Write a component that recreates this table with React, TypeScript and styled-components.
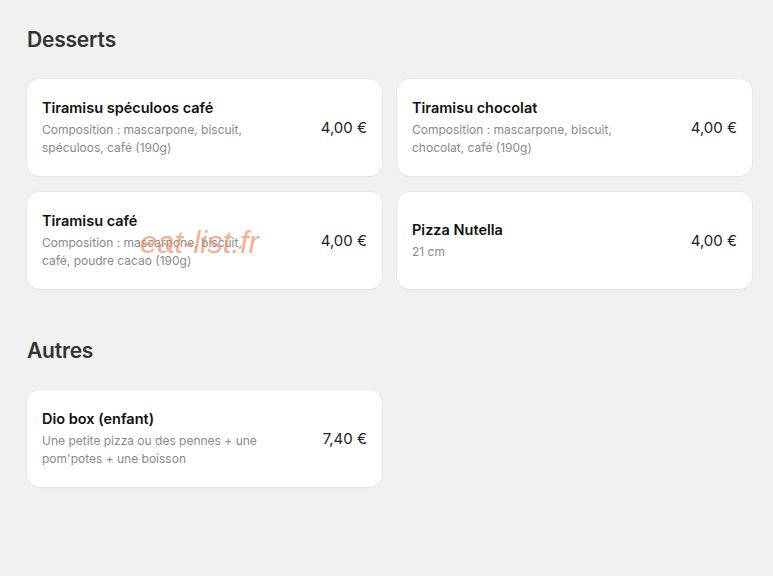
import React from "react";
import styled, { createGlobalStyle } from "styled-components";

const Global = createGlobalStyle`
  html, body { margin: 0; padding: 0; background: #f1f1f1; }
  body { font-family: Inter, "Noto Sans", sans-serif; color: #1a1a1a; }
`;

const Page = styled.div`
  position: relative;
  padding: 25px 21px 40px 27px;
  display: flex;
  flex-direction: column;
  gap: 47px;
`;

const Section = styled.section`
  display: flex;
  flex-direction: column;
  gap: 24px;
`;

const Heading = styled.h2`
  margin: 0;
  font-size: 21px;
  line-height: 30px;
  font-weight: 600;
  color: #333;
  letter-spacing: -0.2px;
`;

const Grid = styled.div`
  display: grid;
  grid-template-columns: 355px 355px;
  column-gap: 15px;
  row-gap: 16px;
`;

const Card = styled.div`
  background: #fff;
  border-radius: 13px;
  box-shadow: 0 0 0 1px rgba(0, 0, 0, 0.025), 0 1px 2px rgba(0, 0, 0, 0.035);
  min-height: 97px;
  box-sizing: border-box;
  padding: 16px 15px;
  display: flex;
  align-items: center;
  justify-content: space-between;
`;

const Info = styled.div`
  display: flex;
  flex-direction: column;
  gap: 3px;
  width: 226px;
`;

const Title = styled.div`
  font-size: 14.5px;
  line-height: 20px;
  font-weight: 600;
  color: #111;
  white-space: nowrap;
`;

const Desc = styled.div`
  font-size: 12px;
  line-height: 18px;
  color: #8a8a8a;
`;

const Price = styled.div`
  font-size: 15px;
  color: #222;
  white-space: nowrap;
`;

const Watermark = styled.div`
  position: absolute;
  left: 140px;
  top: 225px;
  font-family: "Liberation Sans", sans-serif;
  font-style: italic;
  font-size: 31px;
  color: rgba(244, 140, 100, 0.7);
  pointer-events: none;
`;

type Item = { title: string; desc: string; price: string };

const desserts: Item[] = [
  { title: "Tiramisu spéculoos café", desc: "Composition : mascarpone, biscuit, spéculoos, café (190g)", price: "4,00 €" },
  { title: "Tiramisu chocolat", desc: "Composition : mascarpone, biscuit, chocolat, café (190g)", price: "4,00 €" },
  { title: "Tiramisu café", desc: "Composition : mascarpone, biscuit, café, poudre cacao (190g)", price: "4,00 €" },
  { title: "Pizza Nutella", desc: "21 cm", price: "4,00 €" },
];

const autres: Item[] = [
  { title: "Dio box (enfant)", desc: "Une petite pizza ou des pennes + une pom'potes + une boisson", price: "7,40 €" },
];

const ItemCard = ({ item }: { item: Item }) => (
  <Card>
    <Info>
      <Title>{item.title}</Title>
      <Desc>{item.desc}</Desc>
    </Info>
    <Price>{item.price}</Price>
  </Card>
);

export default function App() {
  return (
    <>
      <Global />
      <Page>
        <Section>
          <Heading>Desserts</Heading>
          <Grid>
            {desserts.map((d) => (
              <ItemCard key={d.title} item={d} />
            ))}
          </Grid>
        </Section>
        <Section>
          <Heading>Autres</Heading>
          <Grid>
            {autres.map((d) => (
              <ItemCard key={d.title} item={d} />
            ))}
          </Grid>
        </Section>
        <Watermark>eat-list.fr</Watermark>
      </Page>
    </>
  );
}
